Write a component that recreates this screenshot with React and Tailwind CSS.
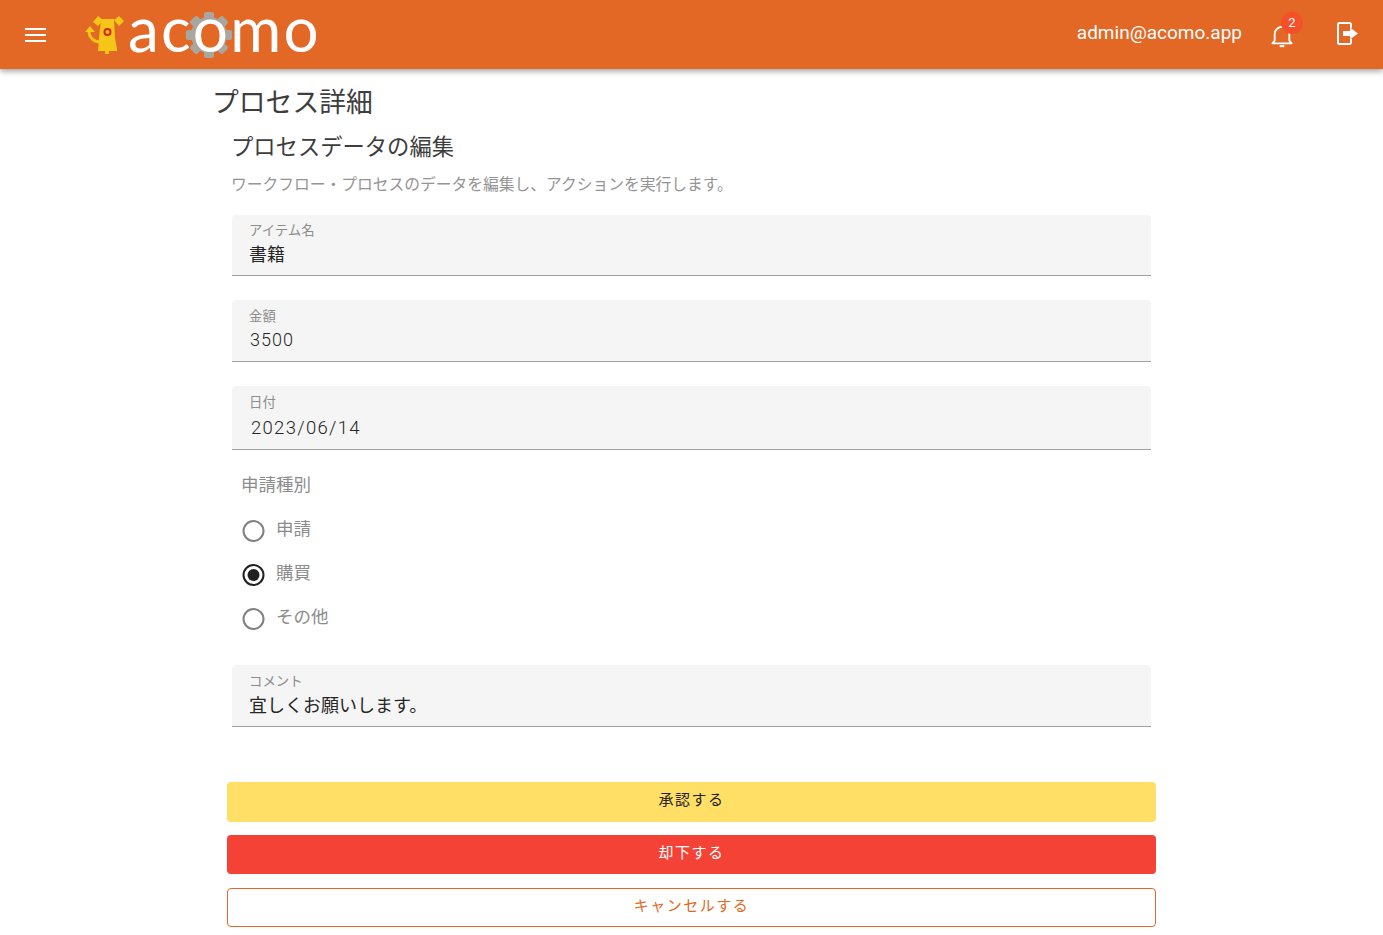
const FONT = "font-['Roboto','Noto_Sans_CJK_JP',sans-serif]";

const Logo = () => (
  <div className="flex items-center h-[69px] ml-[37px]">
    <svg width="42" height="40" viewBox="0 0 42 40" className="mr-[2px]">
      <path d="M17 4h13l1 19 2 11v2h-8v3h-4v-3h-7l1-13z" fill="#f5c518" />
      <path d="M5 16c0 7 5 11 12 11" fill="none" stroke="#f5c518" strokeWidth="3" />
      <path d="M1 17l5-6 5 6z" fill="#f5c518" />
      <path d="M9 7l5-6 5 4-5 6zM30 5l5-4 5 5-5 5z" fill="#f5c518" />
      <circle cx="23.500" cy="17" r="3" fill="none" stroke="#d9261c" strokeWidth="2" />
    </svg>
    <div className="flex items-center h-[69px] font-['Lato',sans-serif] font-normal text-white text-[62px] leading-[50px] tracking-[2.200px] pb-[13px]">
      <span>ac</span>
      <span className="relative">
        <svg width="46" height="46" viewBox="0 0 46 46" className="absolute left-[-7px] top-[9px]">
          <g fill="#a8a69f">
            <circle cx="23" cy="23" r="18" />
            <rect x="18" y="0" width="10" height="46" rx="2" />
            <rect x="18" y="0" width="10" height="46" rx="2" transform="rotate(45 23 23)" />
            <rect x="18" y="0" width="10" height="46" rx="2" transform="rotate(90 23 23)" />
            <rect x="18" y="0" width="10" height="46" rx="2" transform="rotate(135 23 23)" />
          </g>
          <circle cx="23" cy="23" r="13" fill="#e36725" />
        </svg>
        <span className="relative">o</span>
      </span>
      <span>mo</span>
    </div>
  </div>
);

const Header = () => (
  <header className="h-[69px] bg-[#e36725] flex items-center shadow-[0_2px_6px_rgba(0,0,0,0.4)] relative text-white">
    <svg width="22" height="14" viewBox="0 0 22 14" className="ml-[25px]">
      <path d="M0 1h21M0 7h21M0 13h21" stroke="#fff" strokeWidth="2" />
    </svg>
    <Logo />
    <div className="ml-auto text-[19px] mr-[29px] mt-[-3px]">admin@acomo.app</div>
    <div className="relative w-[22px] h-[26px] mr-[44px] mt-[2px]">
      <svg width="22" height="26" viewBox="0 0 24 26">
        <path d="M1.500 21h21l-2.500-3v-7a8 8 0 0 0-16 0v7z" fill="none" stroke="#fff" strokeWidth="2" strokeLinejoin="round" />
        <path d="M9.500 24h5" stroke="#fff" strokeWidth="2.400" />
      </svg>
      <span className="absolute left-[10px] top-[-11px] w-[22px] h-[22px] rounded-full bg-[#f4502a] text-[13px] flex items-center justify-center">2</span>
    </div>
    <svg width="21" height="23" viewBox="0 0 21 23" className="mr-[25px] mt-[-2px]">
      <path d="M14 6V2.500A1.500 1.500 0 0 0 12.500 1h-10A1.500 1.500 0 0 0 1 2.500v18A1.500 1.500 0 0 0 2.500 22h10a1.500 1.500 0 0 0 1.500-1.500V17" fill="none" stroke="#fff" strokeWidth="2" />
      <path d="M6 9h7V5.500l8 6-8 6V14H6z" fill="#fff" />
    </svg>
  </header>
);

const Field = ({ label, value, height, valueClass, labelClass, mb }) => (
  <div className={`bg-[#f5f5f5] rounded-t border-b border-[#a0a0a0] pl-[17px] pt-[7px] ${height} ${mb}`}>
    <div className={`text-[13.400px] leading-[17px] text-[#8c8c8c] ${labelClass}`}>{label}</div>
    <div className={`text-[#262626] leading-[24px] ${valueClass}`}>{value}</div>
  </div>
);

const Radio = ({ label, checked }) => (
  <div className="h-[44px] flex items-center pl-[9px]">
    <svg width="24" height="24" viewBox="0 0 24 24" className="mt-[2px]">
      <circle cx="12.500" cy="12" r="10" fill="none" stroke={checked ? "#212121" : "#808080"} strokeWidth="2" />
      {checked && <circle cx="12.500" cy="12" r="6" fill="#212121" />}
    </svg>
    <span className="ml-[11px] text-[17.500px] text-[#8c8c8c] mt-[-1px]">{label}</span>
  </div>
);

const ActionButton = ({ label, className }) => (
  <button className={`w-full rounded text-[15px] tracking-[1.500px] flex items-center justify-center pb-[3px] ${className}`}>
    {label}
  </button>
);

const App = () => {
  return (
    <div className={`h-[935px] overflow-hidden bg-white ${FONT}`}>
      <Header />
      <main className="w-[955px] mx-auto">
        <h1 className="text-[26.800px] leading-[36px] text-[#3d3d3d] mt-[16px] ml-[-2px]">プロセス詳細</h1>
        <div className="px-[18px]">
          <h2 className="text-[22.300px] leading-[30px] text-[#3d3d3d] mt-[11px] ml-[-1px]">プロセスデータの編集</h2>
          <p className="text-[15.750px] leading-[22px] text-[#949494] mt-[12px] mb-[19px] ml-[-1px]">
            ワークフロー・プロセスのデータを編集し、アクションを実行します。
          </p>
          <Field label="アイテム名" value="書籍" height="h-[61px]" mb="mb-[24px]" valueClass="text-[18px] mt-[4px]" />
          <Field label="金額" value="3500" height="h-[62px]" mb="mb-[24px]" labelClass="mt-[1px]" valueClass="text-[18px] font-light tracking-[1px] pl-[1px] mt-[3px]" />
          <Field label="日付" value="2023/06/14" height="h-[64px]" mb="mb-[24px]" labelClass="mt-[1px]" valueClass="text-[18.500px] font-light tracking-[1.300px] pl-[2px] mt-[5px]" />
          <div className="text-[17.500px] text-[#8c8c8c] pl-[9px] leading-[24px] mb-[11px] mt-[-1px]">申請種別</div>
          <div>
            <Radio label="申請" />
            <Radio label="購買" checked />
            <Radio label="その他" />
          </div>
          <div className="h-[25px]" />
          <Field label="コメント" value="宜しくお願いします。" height="h-[62px]" labelClass="mt-[1px]" valueClass="text-[18px] mt-[4px]" />
        </div>
        <div className="px-[13px] mt-[55px] flex flex-col">
          <ActionButton label="承認する" className="h-[40px] bg-[#ffdf65] text-[#212121] mb-[13px]" />
          <ActionButton label="却下する" className="h-[39px] bg-[#f44336] text-white mb-[14px]" />
          <ActionButton label="キャンセルする" className="h-[39px] bg-white border border-[#e36725] text-[#e36725]" />
        </div>
      </main>
    </div>
  );
};

export default App;
